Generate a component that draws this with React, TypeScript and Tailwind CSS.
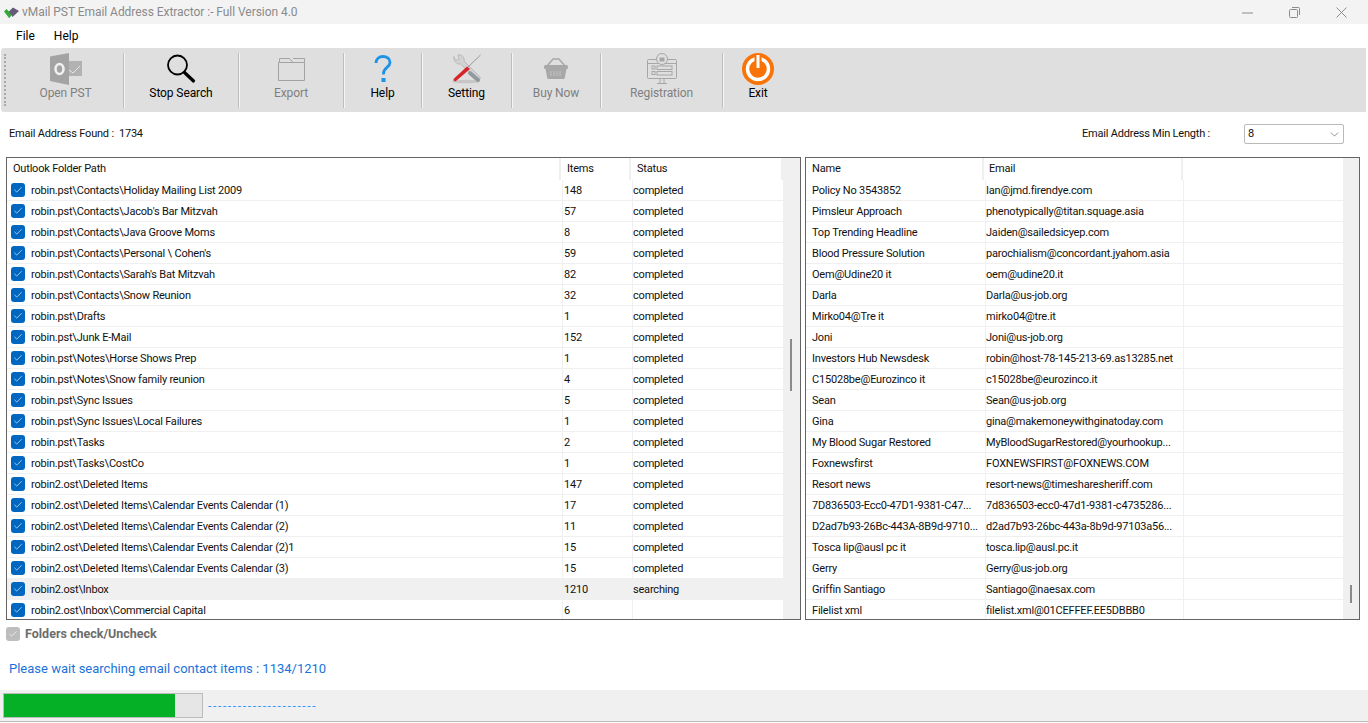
import { Check, ChevronDown } from "lucide-react";

const font = "font-['Roboto','Noto_Sans',sans-serif]";

const folders: [string, string, string][] = [
  ["robin.pst\\Contacts\\Holiday Mailing List 2009", "148", "completed"],
  ["robin.pst\\Contacts\\Jacob's Bar Mitzvah", "57", "completed"],
  ["robin.pst\\Contacts\\Java Groove Moms", "8", "completed"],
  ["robin.pst\\Contacts\\Personal \\ Cohen's", "59", "completed"],
  ["robin.pst\\Contacts\\Sarah's Bat Mitzvah", "82", "completed"],
  ["robin.pst\\Contacts\\Snow Reunion", "32", "completed"],
  ["robin.pst\\Drafts", "1", "completed"],
  ["robin.pst\\Junk E-Mail", "152", "completed"],
  ["robin.pst\\Notes\\Horse Shows Prep", "1", "completed"],
  ["robin.pst\\Notes\\Snow family reunion", "4", "completed"],
  ["robin.pst\\Sync Issues", "5", "completed"],
  ["robin.pst\\Sync Issues\\Local Failures", "1", "completed"],
  ["robin.pst\\Tasks", "2", "completed"],
  ["robin.pst\\Tasks\\CostCo", "1", "completed"],
  ["robin2.ost\\Deleted Items", "147", "completed"],
  ["robin2.ost\\Deleted Items\\Calendar Events Calendar (1)", "17", "completed"],
  ["robin2.ost\\Deleted Items\\Calendar Events Calendar (2)", "11", "completed"],
  ["robin2.ost\\Deleted Items\\Calendar Events Calendar (2)1", "15", "completed"],
  ["robin2.ost\\Deleted Items\\Calendar Events Calendar (3)", "15", "completed"],
  ["robin2.ost\\Inbox", "1210", "searching"],
  ["robin2.ost\\Inbox\\Commercial Capital", "6", ""],
];

const contacts: [string, string][] = [
  ["Policy No 3543852", "Ian@jmd.firendye.com"],
  ["Pimsleur Approach", "phenotypically@titan.squage.asia"],
  ["Top Trending Headline", "Jaiden@sailedsicyep.com"],
  ["Blood Pressure Solution", "parochialism@concordant.jyahom.asia"],
  ["Oem@Udine20 it", "oem@udine20.it"],
  ["Darla", "Darla@us-job.org"],
  ["Mirko04@Tre it", "mirko04@tre.it"],
  ["Joni", "Joni@us-job.org"],
  ["Investors Hub Newsdesk", "robin@host-78-145-213-69.as13285.net"],
  ["C15028be@Eurozinco it", "c15028be@eurozinco.it"],
  ["Sean", "Sean@us-job.org"],
  ["Gina", "gina@makemoneywithginatoday.com"],
  ["My Blood Sugar Restored", "MyBloodSugarRestored@yourhookup..."],
  ["Foxnewsfirst", "FOXNEWSFIRST@FOXNEWS.COM"],
  ["Resort news", "resort-news@timesharesheriff.com"],
  ["7D836503-Ecc0-47D1-9381-C47...", "7d836503-ecc0-47d1-9381-c4735286..."],
  ["D2ad7b93-26Bc-443A-8B9d-9710...", "d2ad7b93-26bc-443a-8b9d-97103a56..."],
  ["Tosca lip@ausl pc it", "tosca.lip@ausl.pc.it"],
  ["Gerry", "Gerry@us-job.org"],
  ["Griffin Santiago", "Santiago@naesax.com"],
  ["Filelist xml", "filelist.xml@01CEFFEF.EE5DBBB0"],
];

function Logo() {
  return (
    <svg width="15" height="11" viewBox="0 0 15 11">
      <path d="M0 4.500L2.500 2 5 4.500 9 1l2 2-5.500 8H5z" fill="#35a83a" />
      <path d="M5 4.500L9 .5l6 3.500-6.500 6z" fill="#66597a" />
    </svg>
  );
}

function OutlookIcon() {
  return (
    <svg width="32" height="32" viewBox="0 0 32 32">
      <rect x="17" y="8" width="15" height="15" fill="#b2b2b2" />
      <path d="M19 17l4 3 7-7" fill="none" stroke="#e6e6e6" strokeWidth="1" />
      <path d="M0 3.500L19 0v32L0 28z" fill="#a3a3a3" />
      <ellipse cx="9.500" cy="16" rx="4" ry="5" fill="none" stroke="#f0f0f0" strokeWidth="2.600" />
    </svg>
  );
}

function SearchIcon() {
  return (
    <svg width="30" height="30" viewBox="0 0 30 30" fill="none" stroke="#000">
      <circle cx="11.500" cy="11" r="9.500" strokeWidth="1.800" />
      <path d="M18.500 18.500L27.500 27" strokeWidth="3.200" strokeLinecap="round" />
    </svg>
  );
}

function FolderIcon() {
  return (
    <svg width="27" height="24" viewBox="0 0 27 24" fill="none" stroke="#a3a3a3" strokeWidth="1">
      <path d="M.5 23.500V5.500h26v18z" />
      <path d="M1.500 5V1.500h10l3.500 4" />
      <path d="M15 1.500h11.500v4" />
    </svg>
  );
}

function HelpIcon() {
  return (
    <svg width="20" height="28" viewBox="0 0 20 28" fill="none" stroke="#1d93e6">
      <path d="M3 8c0-4 3-6.500 7-6.500s7 2.500 7 6c0 5-6.500 5-6.500 11v1" strokeWidth="2.800" />
      <rect x="8.500" y="23" width="4" height="4" fill="#1d93e6" stroke="none" />
    </svg>
  );
}

function SettingIcon() {
  return (
    <svg width="32" height="30" viewBox="0 0 32 30">
      <ellipse cx="15" cy="27.500" rx="14" ry="1.800" fill="#c6c6c6" />
      <path d="M3 2.500c0 3 3 4 5 3L7 1c4-1 7 3 6 6l16 16c1 2-1 4-3 3L9.500 10C6 11 2 7 3 2.500z" fill="#d2d2d2" stroke="#a8a8a8" strokeWidth=".6" />
      <path d="M19 19l8 7" stroke="#8f9a9e" strokeWidth="4" strokeLinecap="round" />
      <path d="M29.500 1L15 15" stroke="#9a9a9a" strokeWidth="1" />
      <path d="M16 12.500L3 24.500c-1.200 1.500 0 3.500 2 2.500L19 15z" fill="#d8232a" />
    </svg>
  );
}

function BasketIcon() {
  return (
    <svg width="26" height="24" viewBox="0 0 26 24" fill="#a8a8a8">
      <path d="M4 9L10 2h6l6 7" fill="none" stroke="#a8a8a8" strokeWidth="1.500" />
      <rect x="1" y="8" width="24" height="4" rx="1.500" />
      <path d="M2.500 12h21l-2 10h-17z" />
      <path d="M8 14v5M11 14v5M14 14v5M17 14v5" stroke="#c4c4c4" strokeWidth="1" />
    </svg>
  );
}

function RegistrationIcon() {
  return (
    <svg width="32" height="32" viewBox="0 0 32 32" fill="none" stroke="#a6a6a6" strokeWidth="1">
      <rect x="1.500" y="6.500" width="29" height="19" rx="1" />
      <path d="M1.500 10.500h29M11 30.500h10M14 25.500v5M18 25.500v5" />
      <circle cx="16" cy="6" r="5.500" fill="#dfdfdf" />
      <rect x="13.500" y="4.500" width="5" height="4" fill="#a6a6a6" stroke="none" />
      <rect x="11" y="13" width="15" height="3.500" />
      <rect x="11" y="18.500" width="15" height="3.500" />
      <rect x="6" y="13" width="3" height="3" />
      <rect x="6" y="18.500" width="3" height="3" />
    </svg>
  );
}

function PowerIcon() {
  return (
    <svg width="32" height="32" viewBox="0 0 32 32">
      <circle cx="16" cy="16" r="16" fill="#f97306" />
      <circle cx="16" cy="16" r="10.500" fill="none" stroke="#fff" strokeWidth="3.500" />
      <rect x="12.500" y="1" width="7" height="15" fill="#f97306" />
      <rect x="14.500" y="2" width="3" height="13" fill="#fff" />
    </svg>
  );
}

function ToolButton({ label, width, disabled, children }: { label: string; width: string; disabled?: boolean; children: React.ReactNode }) {
  return (
    <div className={`flex h-full flex-col items-center ${width}`}>
      <div className="flex h-[32px] items-center justify-center">{children}</div>
      <span className={`text-[12px] leading-[16px] tracking-[-0.1px] ${disabled ? "text-[#808080]" : "text-black"}`}>{label}</span>
    </div>
  );
}

function Sep() {
  return <div className="h-[55px] w-[1px] shrink-0 bg-[#bdbdbd] shadow-[1px_0_0_#f5f5f5]" />;
}

function Box() {
  return (
    <span className="flex h-[14px] w-[14px] shrink-0 items-center justify-center rounded-[3px] bg-[#0067c0]">
      <Check className="h-[10px] w-[10px] text-white" strokeWidth={1.500} />
    </span>
  );
}

export default function App() {
  return (
    <div className={`flex h-[723px] w-[1368px] flex-col overflow-hidden bg-white text-[11px] tracking-[-0.2px] text-[#111] ${font}`}>
      {/* Title bar */}
      <div className="flex h-[24px] shrink-0 items-center bg-[#f3f3f3] pl-[4px] pr-[21px]">
        <Logo />
        <span className="ml-[3px] text-[12px] tracking-[-0.05px] text-[#8a8a8a]">vMail PST Email Address Extractor :- Full Version 4.0</span>
        <div className="ml-auto flex items-center gap-[36px]">
          <svg width="11" height="11" viewBox="0 0 11 11"><path d="M0 6h11" stroke="#8c8c8c" /></svg>
          <svg width="11" height="11" viewBox="0 0 11 11" fill="none" stroke="#8c8c8c"><rect x=".5" y="2.500" width="8" height="8" rx="1" /><path d="M3 .5h6.500a1 1 0 011 1V8" /></svg>
          <svg width="11" height="11" viewBox="0 0 11 11" stroke="#8c8c8c"><path d="M.5.5l10 10M10.500.5l-10 10" /></svg>
        </div>
      </div>

      {/* Menu */}
      <div className="flex h-[24px] shrink-0 items-center gap-[19px] pl-[16px] text-[12px] tracking-normal text-black">
        <span>File</span>
        <span>Help</span>
      </div>

      {/* Toolbar */}
      <div className="mx-[1px] flex h-[64px] w-[1365px] shrink-0 items-center rounded-l-[3px] bg-[#dfdfdf] pl-[3px]">
        <div className="h-[52px] w-[4px] shrink-0 border-l-2 border-dotted border-[#a9a9a9]" />
        <div className="flex h-[55px] items-center">
          <ToolButton label="Open PST" width="w-[115px]" disabled><OutlookIcon /></ToolButton>
          <Sep />
          <ToolButton label="Stop Search" width="w-[114px]"><SearchIcon /></ToolButton>
          <Sep />
          <ToolButton label="Export" width="w-[104px]" disabled><FolderIcon /></ToolButton>
          <Sep />
          <ToolButton label="Help" width="w-[77px]"><HelpIcon /></ToolButton>
          <Sep />
          <ToolButton label="Setting" width="w-[89px]"><SettingIcon /></ToolButton>
          <Sep />
          <ToolButton label="Buy Now" width="w-[88px]" disabled><BasketIcon /></ToolButton>
          <Sep />
          <ToolButton label="Registration" width="w-[121px]" disabled><RegistrationIcon /></ToolButton>
          <Sep />
          <ToolButton label="Exit" width="w-[70px]"><PowerIcon /></ToolButton>
        </div>
      </div>

      {/* Summary row */}
      <div className="flex h-[45px] shrink-0 items-center pl-[9px] pr-[24px]">
        <span>Email Address Found :&nbsp; 1734</span>
        <span className="ml-auto">Email Address Min Length :</span>
        <div className="mb-[1px] ml-[34px] flex h-[20px] w-[100px] items-center justify-between rounded-[2px] border border-[#b9b9b9] pl-[3px] pr-[2px]">
          <span>8</span>
          <ChevronDown className="h-[13px] w-[13px] text-[#555]" strokeWidth={1.200} />
        </div>
      </div>

      {/* Tables */}
      <div className="flex h-[463px] shrink-0 gap-[4px] pl-[6px]">
        <div className="flex h-full w-[795px] overflow-hidden border border-[#646464]">
          <div className="min-w-0 flex-1">
            <div className="flex h-[22px] items-center">
              <span className="w-[554px] border-r-2 border-[#efefef] pl-[6px] leading-[22px]">Outlook Folder Path</span>
              <span className="w-[70px] border-r-2 border-[#efefef] pl-[6px] leading-[22px]">Items</span>
              <span className="w-[152px] border-r-2 border-[#efefef] pl-[6px] leading-[22px]">Status</span>
            </div>
            {folders.map(([path, items, status]) => (
              <div key={path} className={`flex h-[21px] w-[776px] items-center border-b border-[#f0f0f0] ${status === "searching" ? "bg-[#f0f0f0]" : ""}`}>
                <div className="flex w-[555px] items-center gap-[6px] pl-[4px]">
                  <Box />
                  <span className="pt-[3px]">{path}</span>
                </div>
                <span className="flex h-full w-[70px] items-center border-l border-[#f0f0f0] pl-[1px] pt-[3px]">{items}</span>
                <span className="flex h-full w-[151px] items-center border-l border-[#f0f0f0] pt-[3px]">{status}</span>
              </div>
            ))}
          </div>
          <div className="w-[17px] shrink-0 bg-[#f0f0f0] pl-[7px] pt-[181px]">
            <div className="h-[52px] w-[2px] bg-[#8a8a8a]" />
          </div>
        </div>

        <div className="flex h-full w-[555px] overflow-hidden border border-[#646464]">
          <div className="min-w-0 flex-1">
            <div className="flex h-[22px] items-center">
              <span className="w-[178px] border-r-2 border-[#efefef] pl-[6px] leading-[22px]">Name</span>
              <span className="w-[199px] border-r-2 border-[#efefef] pl-[5px] leading-[22px]">Email</span>
            </div>
            {contacts.map(([name, email]) => (
              <div key={email} className="flex h-[21px] items-center border-b border-[#f0f0f0]">
                <span className="w-[179px] whitespace-nowrap pl-[6px] pt-[3px]">{name}</span>
                <span className="flex h-full w-[199px] items-center whitespace-nowrap border-x border-[#f0f0f0] pt-[3px]">{email}</span>
              </div>
            ))}
          </div>
          <div className="w-[16px] shrink-0 bg-[#f0f0f0] pl-[7px] pt-[427px]">
            <div className="h-[18px] w-[2px] bg-[#8a8a8a]" />
          </div>
        </div>
      </div>

      {/* Check all */}
      <div className="flex h-[28px] shrink-0 items-center gap-[5px] pl-[6px]">
        <span className="flex h-[14px] w-[14px] items-center justify-center rounded-[3px] bg-[#bdbdbd]">
          <Check className="h-[10px] w-[10px] text-white" strokeWidth={1.500} />
        </span>
        <span className="text-[12.500px] font-bold tracking-normal text-[#6d6d6d]">Folders check/Uncheck</span>
      </div>

      {/* Search status */}
      <div className="flex h-[42px] shrink-0 items-center pl-[9px] text-[13px] tracking-normal text-[#1a73d9]">
        Please wait searching email contact items : 1134/1210
      </div>

      {/* Status bar */}
      <div className="flex h-[32px] shrink-0 items-center border-b border-[#bdbdbd] bg-[#f0f0f0] pl-[3px]">
        <div className="h-[25px] w-[200px] border border-[#bcbcbd] bg-[#e6e6e6]">
          <div className="h-full w-[171px] bg-[#05b026]" />
        </div>
        <span className="ml-[5px] text-[12px] tracking-[1.650px] text-[#3399ff]">----------------------</span>
      </div>
    </div>
  );
}
